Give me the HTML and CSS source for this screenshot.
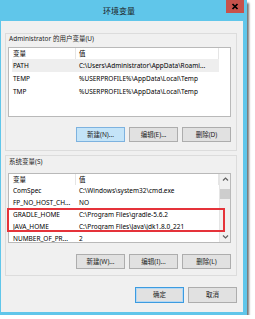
FILE: index.html
```html
<!DOCTYPE html>
<html lang="zh-CN">
<head>
  <meta charset="UTF-8" />
  <title>环境变量</title>
  <link rel="stylesheet" href="styles.css">
</head>
<body>
  <div class="window">
    <div class="titlebar">
      <div class="title">环境变量</div>
      <div class="close">
        <svg width="18" height="13" viewBox="0 0 18 13"><path d="M6.5 4 L11.5 9 M11.5 4 L6.5 9" stroke="#000" stroke-width="1.7"/></svg>
      </div>
    </div>

    <div class="client">
      <div class="group group-user">
        <div class="group-label">Administrator 的用户变量(U)</div>
        <div class="list">
          <div class="list-body">
            <div class="head">
              <span class="h1">变量</span><span class="h2">值</span><span class="h3"></span>
            </div>
            <div class="row hot"><span class="c1">PATH</span><span class="c2">C:\Users\Administrator\AppData\Roami...</span></div>
            <div class="row"><span class="c1">TEMP</span><span class="c2">%USERPROFILE%\AppData\Local\Temp</span></div>
            <div class="row"><span class="c1">TMP</span><span class="c2">%USERPROFILE%\AppData\Local\Temp</span></div>
          </div>
        </div>
        <div class="btns">
          <div class="btn btn-hot">新建(N)...</div>
          <div class="btn">编辑(E)...</div>
          <div class="btn">删除(D)</div>
        </div>
      </div>

      <div class="group group-sys">
        <div class="group-label">系统变量(S)</div>
        <div class="list">
          <div class="list-body">
            <div class="head">
              <span class="h1">变量</span><span class="h2">值</span>
            </div>
            <div class="row"><span class="c1">ComSpec</span><span class="c2">C:\Windows\system32\cmd.exe</span></div>
            <div class="row"><span class="c1">FP_NO_HOST_CH...</span><span class="c2">NO</span></div>
            <div class="row"><span class="c1">GRADLE_HOME</span><span class="c2">C:\Program Files\gradle-5.6.2</span></div>
            <div class="row"><span class="c1">JAVA_HOME</span><span class="c2">C:\Program Files\Java\jdk1.8.0_221</span></div>
            <div class="row"><span class="c1">NUMBER_OF_PR...</span><span class="c2">2</span></div>
          </div>
          <div class="scrollbar">
            <div class="arrow">
              <svg width="11" height="11" viewBox="0 0 11 11"><path d="M3 6.5 L5.5 4 L8 6.5" fill="none" stroke="#606060" stroke-width="1.2"/></svg>
            </div>
            <div class="track"><div class="thumb"></div></div>
            <div class="arrow">
              <svg width="11" height="11" viewBox="0 0 11 11"><path d="M3 4.5 L5.5 7 L8 4.5" fill="none" stroke="#606060" stroke-width="1.2"/></svg>
            </div>
          </div>
        </div>
        <div class="btns">
          <div class="btn">新建(W)...</div>
          <div class="btn">编辑(I)...</div>
          <div class="btn">删除(L)</div>
        </div>
      </div>

      <div class="footer">
        <div class="btn btn-default">确定</div>
        <div class="btn">取消</div>
      </div>
    </div>

    <div class="mark"></div>
  </div>
</body>
</html>
```

FILE: styles.css
```css
body {
  margin: 0;
  background: #ffffff;
  font-family: "Noto Sans", "Noto Sans CJK SC", sans-serif;
  font-size: 6.5px;
  color: #000;
}

.window {
  position: relative;
  width: 247px;
  height: 315px;
  background: #60c6ea;
  box-shadow: 2px 3px 2px rgba(0, 0, 0, 0.55);
  display: flex;
  flex-direction: column;
}

.titlebar {
  height: 21px;
  display: flex;
}

.title {
  flex: 1;
  padding-left: 12px;
  text-align: center;
  font-size: 8px;
  line-height: 21px;
  color: #1b1b1b;
}

.close {
  width: 18px;
  height: 13px;
  margin-right: 3px;
  background: #c7524c;
}

.close svg {
  display: block;
}

.client {
  flex: 1;
  margin: 0 4px 3px 1px;
  padding: 12px 6px 0 4px;
  background: #f0f0f0;
  display: flex;
  flex-direction: column;
}

.group {
  border: 1px solid #dcdcdc;
  padding: 0 5px 8px 2px;
  display: flex;
  flex-direction: column;
}

.group-label {
  height: 13px;
  line-height: 10px;
  padding-left: 1px;
  color: #1e1e1e;
}

.group-sys {
  margin-top: 4px;
  padding-bottom: 6px;
}

.group-sys .group-label {
  height: 17px;
  line-height: 12px;
}

.list {
  height: 70px;
  box-sizing: border-box;
  border: 1px solid #b9b9b9;
  background: #fff;
  display: flex;
  overflow: hidden;
}

.list-body {
  flex: 1;
}

.head {
  display: flex;
  height: 11px;
  line-height: 11px;
}

.head span {
  border-right: 1px solid #e5e5e5;
  box-sizing: border-box;
}

.h1 {
  width: 67px;
  padding-left: 4px;
}

.h2 {
  flex: 1;
  padding-left: 3px;
}

.h3 {
  width: 11px;
}

.group-user .h3 {
  border-right: none;
}

.row {
  display: flex;
  margin-left: 3px;
  width: 207px;
  height: 13px;
  line-height: 13px;
  white-space: nowrap;
}

.group-sys .row {
  height: 12px;
  line-height: 12px;
}

.row.hot {
  background: #eeeeee;
}

.c1 {
  width: 64px;
  padding-left: 1px;
  box-sizing: border-box;
}

.c2 {
  padding-left: 3px;
}

.scrollbar {
  width: 11px;
  border-left: 1px solid #e5e5e5;
  background: #f0f0f0;
  display: flex;
  flex-direction: column;
}

.arrow {
  height: 11px;
}

.arrow svg {
  display: block;
}

.track {
  flex: 1;
  padding-top: 4px;
}

.thumb {
  height: 10px;
  background: #cdcdcd;
}

.btns {
  display: flex;
  justify-content: flex-end;
  gap: 4px;
  margin-top: 10px;
}

.group-sys .btns {
  margin-top: 11px;
}

.btn {
  width: 49px;
  height: 15px;
  box-sizing: border-box;
  border: 1px solid #adadad;
  background: #e1e1e1;
  text-align: center;
  line-height: 13px;
  color: #1e1e1e;
}

.btn-hot {
  background: #c4e4f8;
  border-color: #7db2df;
}

.footer {
  display: flex;
  justify-content: flex-end;
  gap: 4px;
  margin-top: 11px;
}

.footer .btn {
  height: 16px;
  line-height: 14px;
}

.btn-default {
  border-color: #3c9be0;
  box-shadow: inset 0 0 0 1px #b5d8f3;
}

/* red annotation box */
.mark {
  position: absolute;
  left: 7px;
  top: 208px;
  width: 218px;
  height: 24px;
  box-sizing: border-box;
  border: 2px solid #e5333a;
}
```
